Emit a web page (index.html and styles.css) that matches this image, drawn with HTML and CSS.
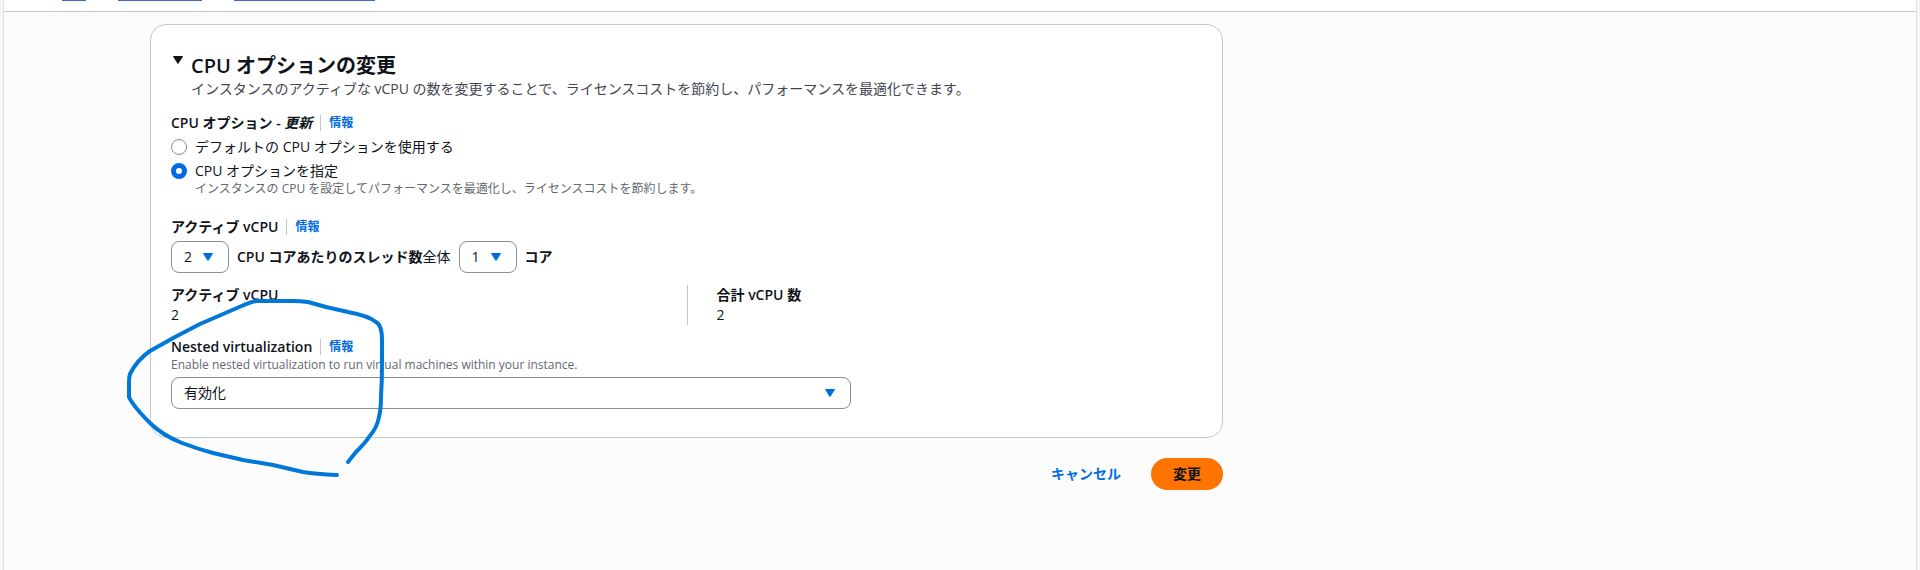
FILE: index.html
```html
<!DOCTYPE html>
<html lang="ja">
<head>
  <meta charset="UTF-8">
  <meta name="viewport" content="width=device-width, initial-scale=1.0">
  <title>CPU オプションの変更</title>
  <link rel="stylesheet" href="styles.css">
</head>
<body>
  <div class="app">
    <nav class="breadcrumbs">
      <a class="crumb crumb-service" href="#"></a>
      <a class="crumb crumb-list" href="#"></a>
      <a class="crumb crumb-instance" href="#"></a>
    </nav>

    <main class="content">
      <form class="form">
        <details class="card" open>
          <summary class="card-header">
            <svg class="caret" viewBox="0 0 10 8"><path d="M.5 .5h9L5 7.5z"/></svg>
            <div>
              <h2>CPU オプションの変更</h2>
              <p class="card-description">インスタンスのアクティブな vCPU の数を変更することで、ライセンスコストを節約し、パフォーマンスを最適化できます。</p>
            </div>
          </summary>

          <fieldset class="field options">
            <legend class="label-row">
              <span class="label">CPU オプション - <em>更新</em></span>
              <a class="info" href="#">情報</a>
            </legend>
            <div class="radio-row">
              <input type="radio" name="cpu" id="cpu-default">
              <label for="cpu-default">デフォルトの CPU オプションを使用する</label>
            </div>
            <div class="radio-row">
              <input type="radio" name="cpu" id="cpu-custom" checked>
              <label for="cpu-custom">CPU オプションを指定</label>
            </div>
            <p class="hint radio-hint">インスタンスの CPU を設定してパフォーマンスを最適化し、ライセンスコストを節約します。</p>
          </fieldset>

          <div class="field threads">
            <div class="label-row">
              <span class="label">アクティブ vCPU</span>
              <a class="info" href="#">情報</a>
            </div>
            <div class="thread-row">
              <span class="select small">
                <select id="threads"><option>2</option><option>1</option></select>
                <svg class="caret" viewBox="0 0 10 8"><path d="M.5 .5h9L5 7.5z"/></svg>
              </span>
              <span><label class="label" for="threads">CPU コアあたりのスレッド数</label>全体</span>
              <span class="select small">
                <select id="cores"><option>1</option></select>
                <svg class="caret" viewBox="0 0 10 8"><path d="M.5 .5h9L5 7.5z"/></svg>
              </span>
              <label class="label" for="cores">コア</label>
            </div>
          </div>

          <dl class="totals">
            <div>
              <dt>アクティブ vCPU</dt>
              <dd>2</dd>
            </div>
            <div>
              <dt>合計 vCPU 数</dt>
              <dd>2</dd>
            </div>
          </dl>

          <div class="field">
            <div class="label-row">
              <label class="label" for="nested">Nested virtualization</label>
              <a class="info" href="#">情報</a>
            </div>
            <p class="hint">Enable nested virtualization to run virtual machines within your instance.</p>
            <span class="select wide">
              <select id="nested"><option>有効化</option><option>無効化</option></select>
              <svg class="caret" viewBox="0 0 10 8"><path d="M.5 .5h9L5 7.5z"/></svg>
            </span>
          </div>
        </details>

        <div class="actions">
          <button type="button" class="btn btn-link">キャンセル</button>
          <button type="submit" class="btn btn-primary">変更</button>
        </div>
      </form>
    </main>
  </div>

  <!-- pen mark around the nested virtualization field -->
  <svg class="pen" viewBox="0 0 270 190">
    <path d="M228 172 L236 162 Q246 152 249 147 Q257 138 259 127 Q261 119 261 107 Q262 90 262 75 V50 Q262 35 256 32 Q249 26 228 22 L206 17 L188 12 Q180 11 173 11 H137 Q133 11 117 18 L80 34 L55 47 L30 61 Q17 70 10 84 Q9 87 9 92 V107 Q13 116 30 133 Q42 145 62 153 Q78 159 93 163 L123 170 L153 175 L183 182 Q195 184 217 185"/>
  </svg>
</body>
</html>
```

FILE: styles.css
```css
* {
  box-sizing: border-box;
}

body {
  margin: 0;
  background: #f5f5f5;
  color: #0f141a;
  font: 14px/20px "Open Sans", "Noto Sans CJK JP", sans-serif;
}

h2,
p,
dl,
dd {
  margin: 0;
}

a {
  color: #006ce0;
  text-decoration: none;
}

.app {
  min-height: 100vh;
  margin: 0 3px;
  background: #fcfcfd;
  border: solid #dedee3;
  border-width: 0 1px;
}

/* breadcrumbs */
.breadcrumbs {
  display: flex;
  gap: 32px;
  height: 12px;
  padding-left: 58px;
  background: #fff;
  border-bottom: 1px solid #c6c6cd;
}

.crumb {
  height: 1px;
  background: #4a63cc;
}

.crumb-service {
  width: 24px;
}

.crumb-list {
  width: 84px;
}

.crumb-instance {
  width: 141px;
}

.content {
  padding: 12px 20px 20px 146px;
}

.form {
  max-width: 1073px;
}

/* card */
.card {
  padding: 28px 20px;
  background: #fff;
  border: 1px solid #c6c6cd;
  border-radius: 16px;
}

.card-header {
  display: flex;
  gap: 8px;
  padding-left: 2px;
  list-style: none;
}

.card-header > .caret {
  margin-top: 3px;
}

.card-header h2 {
  font-size: 20px;
  line-height: 26px;
  font-weight: 600;
}

.card-description {
  color: #424650;
}

.caret {
  flex: none;
  width: 10px;
  height: 8px;
  fill: currentColor;
  stroke: currentColor;
  stroke-linejoin: round;
}

/* fields */
.field {
  margin: 0;
  padding: 0;
  border: 0;
}

.options {
  margin-top: 14px;
}

.threads {
  margin-top: 20px;
}

.label-row {
  display: flex;
  align-items: center;
  padding: 0;
}

.label {
  font-weight: 600;
}

.info {
  margin-left: 8px;
  padding-left: 8px;
  border-left: 1px solid #c6c6cd;
  font-size: 12px;
  line-height: 16px;
  font-weight: 600;
}

.hint {
  color: #656871;
  font-size: 12px;
  line-height: 16px;
}

.radio-row {
  display: flex;
  align-items: center;
  gap: 8px;
  margin-top: 4px;
}

.radio-row input {
  width: 16px;
  height: 16px;
  margin: 0;
  appearance: none;
  background: #fff;
  border: 1px solid #8c8c94;
  border-radius: 50%;
}

.radio-row input:checked {
  border: 5px solid #006ce0;
}

.radio-hint {
  padding-left: 24px;
}

.select {
  display: grid;
  align-items: center;
}

.select select,
.select .caret {
  grid-area: 1 / 1;
}

.select select {
  width: 100%;
  height: 32px;
  padding: 0 12px;
  appearance: none;
  background: #fff;
  border: 1px solid #8c8c94;
  border-radius: 8px;
  color: inherit;
  font: inherit;
}

.select .caret {
  justify-self: end;
  margin-right: 16px;
  color: #006ce0;
  pointer-events: none;
}

.small {
  width: 58px;
}

.wide {
  width: 66%;
  margin-top: 4px;
}

.thread-row {
  display: flex;
  align-items: center;
  gap: 8px;
  margin-top: 4px;
}

.totals {
  display: grid;
  grid-template-columns: 1fr 1fr;
  margin: 12px 0;
}

.totals > div + div {
  padding-left: 29px;
  border-left: 1px solid #c6c6cd;
}

.totals dt {
  font-weight: 600;
}

/* buttons */
.actions {
  display: flex;
  justify-content: flex-end;
  gap: 8px;
  margin-top: 20px;
}

.btn {
  height: 32px;
  padding: 0 22px;
  border: 0;
  border-radius: 16px;
  font: inherit;
  font-weight: 600;
}

.btn-link {
  background: transparent;
  color: #006ce0;
}

.btn-primary {
  background: #ff7300;
  color: #0f141a;
}

.pen {
  position: absolute;
  top: 290px;
  left: 120px;
  width: 270px;
  height: 190px;
  fill: none;
  stroke: #0078d7;
  stroke-width: 4;
  stroke-linecap: round;
  stroke-linejoin: round;
  pointer-events: none;
}
```
